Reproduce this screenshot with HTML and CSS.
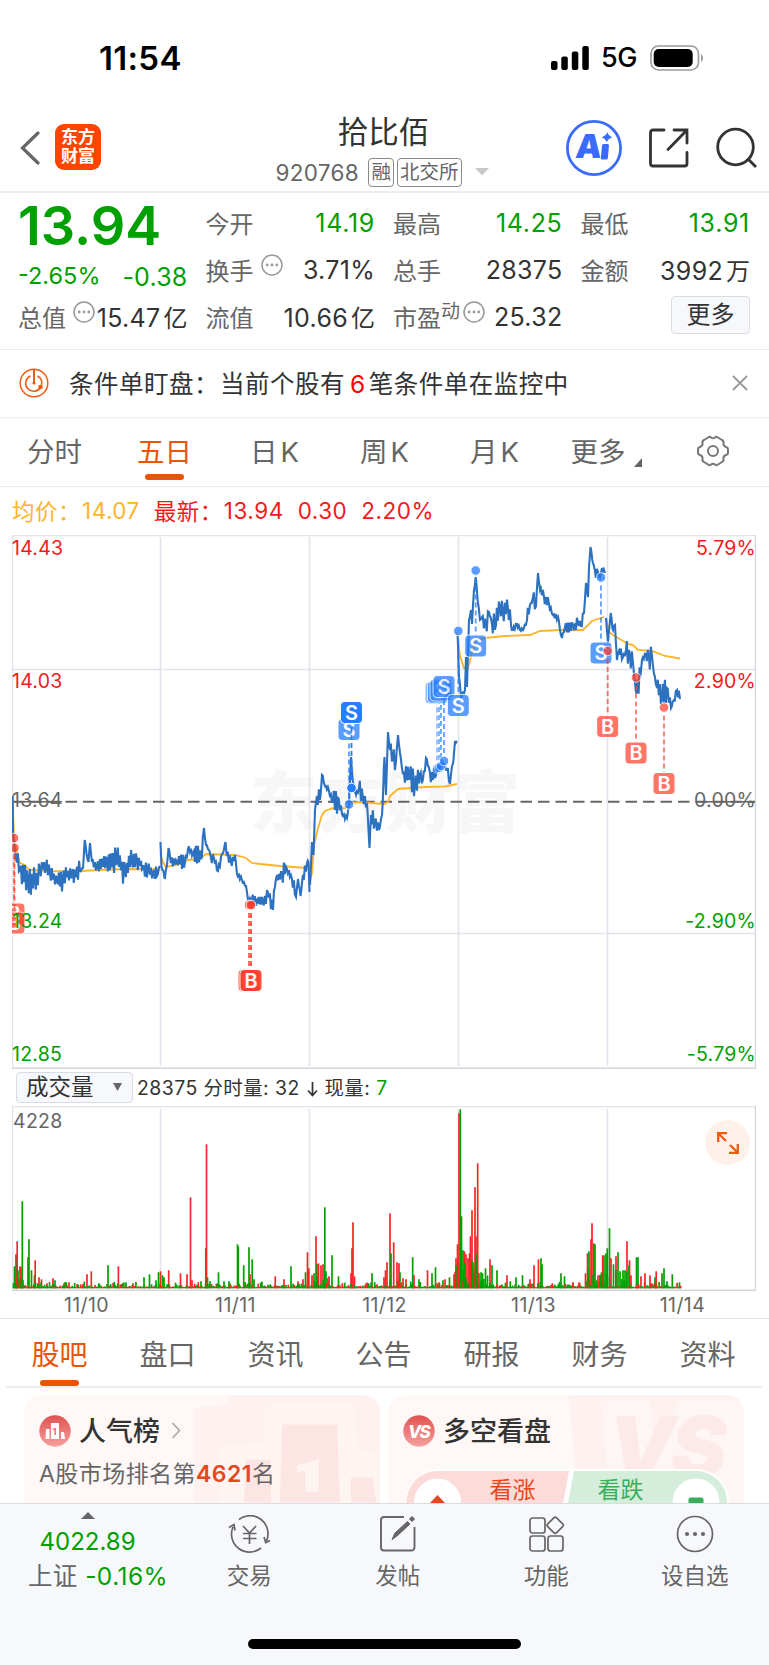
FILE: index.html
```html
<!DOCTYPE html>
<html lang="zh-CN">
<head>
  <meta charset="utf-8">
  <title>拾比佰 920768</title>
  <link rel="stylesheet" href="styles.css">
</head>
<body>
  <div class="status-bar">
    <span class="time">11:54</span>
    <div class="status-icons">
      <svg class="signal" width="38" height="24" viewBox="0 0 38 24">
        <rect x="0" y="15" width="6.5" height="9" rx="2"/>
        <rect x="10.3" y="10.5" width="6.5" height="13.5" rx="2"/>
        <rect x="20.8" y="5.5" width="6.5" height="18.5" rx="2"/>
        <rect x="31.3" y="0" width="6.5" height="24" rx="2"/>
      </svg>
      <span class="network">5G</span>
      <svg width="54" height="26" viewBox="0 0 54 26">
        <rect x="1" y="1" width="47.5" height="24" rx="7.5" fill="none" stroke="#9a9a9a" stroke-width="1.6"/>
        <rect x="3.7" y="4" width="39" height="18" rx="5"/>
        <path d="M51 9v8c2.6-1.4 2.6-6.6 0-8z" fill="#9a9a9a"/>
      </svg>
    </div>
  </div>

  <div class="header">
    <div class="header-left">
      <svg width="20" height="34" viewBox="0 0 20 34"><path d="M18 2L2.500 17L18 32" fill="none" stroke="#666" stroke-width="3.2" stroke-linecap="round"/></svg>
      <div class="logo"><span>东方</span><span>财富</span></div>
    </div>
    <div class="header-title">
      <h1 class="stock-name">拾比佰</h1>
      <div class="stock-meta">
        <span class="code">920768</span>
        <span class="tag">融</span>
        <span class="tag">北交所</span>
        <svg class="meta-arrow" width="14" height="8" viewBox="0 0 14 8"><path d="M0 0h14L7 7.500z" fill="#c8c8c8"/></svg>
      </div>
    </div>
    <div class="header-right">
      <svg width="56" height="56" viewBox="0 0 56 56">
        <circle cx="28" cy="28" r="26.600" fill="none" stroke="#3a6bff" stroke-width="2.800"/>
        <g fill="#3a6bff" transform="translate(3 0) skewX(-5)">
          <text class="ai-letter" x="9" y="38.300">A</text>
          <rect x="35.200" y="24" width="7" height="15.500" rx="1.500"/>
          <path d="M39.500 13.500Q40.500 16.200 43.500 17.200Q40.500 18.500 39.500 21Q38.500 18.500 35.500 17.200Q38.500 16.200 39.500 13.500z" stroke="#3a6bff"/>
        </g>
      </svg>
      <svg width="40" height="40" viewBox="0 0 40 40" fill="none" stroke="#333" stroke-width="2.800">
        <path d="M15 2H4Q1.500 2 1.500 4.500V35.500Q1.500 38 4 38H35.500Q38 38 38 35.500V24.500M25 2H38V15M38 2L19 21.500" stroke-linecap="round"/>
      </svg>
      <svg width="42" height="42" viewBox="0 0 42 42" fill="none" stroke="#333" stroke-width="2.800">
        <circle cx="19.500" cy="20" r="17.800"/><path d="M31.500 31.500L40 40"/>
      </svg>
    </div>
  </div>

  <div class="quote">
    <div class="quote-price">
      <div class="price">13.94</div>
      <div class="change"><span>-2.65%</span><span class="diff">-0.38</span></div>
    </div>
    <div class="cell"><span class="label">今开</span><span class="value down">14.19</span></div>
    <div class="cell"><span class="label">最高</span><span class="value down">14.25</span></div>
    <div class="cell"><span class="label">最低</span><span class="value down">13.91</span></div>
    <div class="cell"><span class="label">换手</span><svg class="dots" viewBox="0 0 22 22"><use href="#dots"/></svg><span class="value">3.71%</span></div>
    <div class="cell"><span class="label">总手</span><span class="value">28375</span></div>
    <div class="cell"><span class="label">金额</span><span class="value">3992<i>万</i></span></div>
    <div class="cell"><span class="label">总值</span><svg class="dots" viewBox="0 0 22 22"><use href="#dots"/></svg><span class="value">15.47<i>亿</i></span></div>
    <div class="cell"><span class="label">流值</span><span class="value">10.66<i>亿</i></span></div>
    <div class="cell"><span class="label">市盈<sup>动</sup></span><svg class="dots dots-tight" viewBox="0 0 22 22"><use href="#dots"/></svg><span class="value">25.32</span></div>
    <div class="cell cell-more"><button class="more-button">更多</button></div>
  </div>

  <div class="notice">
    <svg width="30" height="30" viewBox="0 0 30 30" fill="none" stroke="#ef5a10" stroke-width="1.500">
      <circle cx="15" cy="15" r="13.800"/>
      <path d="M11.500 8A8 8 0 1 0 21.500 19.500M18.500 8A8 8 0 0 1 22.500 17"/>
      <path d="M15 1V15" stroke-width="2"/>
      <circle cx="15" cy="15" r="1.600" fill="#ef5a10" stroke="none"/>
      <circle cx="21.500" cy="19" r="2.300" fill="#ef5a10" stroke="none"/>
    </svg>
    <span class="notice-text">条件单盯盘：<span class="notice-msg">当前个股有<b>6</b>笔条件单在监控中</span></span>
    <svg class="close" width="16" height="16" viewBox="0 0 16 16"><path d="M1 1L15 15M15 1L1 15" stroke="#999" stroke-width="1.800"/></svg>
  </div>

  <div class="period-tabs">
    <span>分时</span>
    <span class="active">五日</span>
    <span>日<i>K</i></span>
    <span>周<i>K</i></span>
    <span>月<i>K</i></span>
    <span class="tab-more">更多<svg width="8" height="9" viewBox="0 0 8 9"><path d="M8 0V9H0z" fill="#666"/></svg></span>
    <span class="tab-gear">
      <svg width="34" height="32" viewBox="0 0 34 32" fill="none" stroke="#777" stroke-width="2">
        <path d="M12 2.500Q14 1 15 2.500Q17 4 19 2.500Q20 1 22 2.500L26 5Q28 6 27.500 8Q27 11 30 12Q32 12.500 32 14V18Q32 19.500 30 20Q27 21 27.500 24Q28 26 26 27L22 29.500Q20 31 19 29.500Q17 28 15 29.500Q14 31 12 29.500L8 27Q6 26 6.500 24Q7 21 4 20Q2 19.500 2 18V14Q2 12.500 4 12Q7 11 6.500 8Q6 6 8 5z"/>
        <circle cx="17" cy="16" r="5"/>
      </svg>
    </span>
  </div>

  <div class="legend">
    <span class="avg name">均价：</span><span class="avg num">14.07</span>
    <span class="latest name">最新：</span><span class="latest num">13.94</span>
    <span class="latest num">0.30</span>
    <span class="latest num">2.20%</span>
  </div>

  <svg class="price-chart" viewBox="12 535 744 534">
    <text class="watermark" x="250" y="827" textLength="270">东方财富</text>
    <g class="grid">
      <path d="M12.500 535V1068M160.500 537V1066M309.500 537V1066M458.500 537V1066M607.500 537V1066M12 535.500H756M12 669.500H756M12 933.500H756"/>
      <path class="frame" d="M755.500 535V1068.200H12"/>
    </g>
    <path class="zero-line" d="M13 801.700H755"/>
    <path class="zero-end" d="M13 801.700H62M697 801.700H755"/>
    <g id="avgLines" class="avg-line"></g>
    <g id="priceLines" class="price-line"></g>
    <g id="marks"></g>
    <g class="axis">
      <text class="red" x="12" y="554.500">14.43</text>
      <text class="red" x="12" y="687.500">14.03</text>
      <text class="gray" x="12" y="807">13.64</text>
      <text class="green" x="12" y="928">13.24</text>
      <text class="green" x="12" y="1061">12.85</text>
      <g text-anchor="end">
        <text class="red" x="756" y="554.500">5.79%</text>
        <text class="red" x="756" y="687.500">2.90%</text>
        <text class="gray" x="756" y="807">0.00%</text>
        <text class="green" x="756" y="928">-2.90%</text>
        <text class="green" x="756" y="1061">-5.79%</text>
      </g>
    </g>
  </svg>

  <div class="volume-head">
    <button class="volume-select">成交量<svg width="9" height="8" viewBox="0 0 9 8"><path d="M0 0h9L4.500 8z" fill="#666"/></svg></button>
    <span class="volume-info">28375 分时量: 32 <svg width="11" height="16" viewBox="0 0 11 16"><path d="M5.500 1V14M1 9.500L5.500 14.500L10 9.500" fill="none" stroke="#333" stroke-width="1.700"/></svg> 现量: <em>7</em></span>
  </div>

  <div class="volume-wrap">
    <svg class="volume-chart" viewBox="12 1106 744 185">
      <path class="grid-line" d="M12.500 1106V1290M160.500 1109V1288M309.500 1109V1288M458.500 1109V1288M607.500 1109V1288M12 1106.500H756"/>
      <path class="frame" d="M755.500 1106V1290.200H12"/>
      <g id="bars"></g>
      <text class="volume-max" x="13" y="1127.500">4228</text>
    </svg>
    <div class="expand">
      <svg width="22" height="22" viewBox="0 0 22 22" fill="none" stroke="#ef5a10" stroke-width="2.300"><path d="M1.200 10V1.200H10M1.200 1.200L9 9M20.800 12V20.800H12M20.800 20.800L13 13"/></svg>
    </div>
  </div>
  <div class="dates"><span>11/10</span><span>11/11</span><span>11/12</span><span>11/13</span><span>11/14</span></div>

  <div class="info-tabs">
    <span class="active">股吧</span>
    <span>盘口</span>
    <span>资讯</span>
    <span>公告</span>
    <span>研报</span>
    <span>财务</span>
    <span>资料</span>
  </div>

  <div class="cards">
    <div class="card">
      <svg class="card-bg" viewBox="0 0 356 107">
        <path d="M170 12L204 10V0H356V107H170z" fill="#fef1ef"/>
        <path d="M196 50L240 48L242 8L330 7L333 56L356 58V107H196z" fill="#fef5f3"/>
        <path d="M222 64H247V107H220zM258 29H313L316 107H256zM327 82H349L352 107H327z" fill="#fce5e3"/>
        <path d="M273 70L295 63V96H281V75L273 77z" fill="#fef5f3"/>
      </svg>
      <div class="card-head">
        <svg width="32" height="32" viewBox="0 0 32 32">
          <defs><linearGradient id="badge" x1="0" y1="0" x2="0" y2="1"><stop offset="0" stop-color="#e05250"/><stop offset="1" stop-color="#f4a19d"/></linearGradient></defs>
          <circle cx="16" cy="16" r="15.700" fill="url(#badge)"/>
          <path d="M7 14H10.500V24H6.500zM12 8H20V24H12zM22 17H25L26 24H22z" fill="#fff"/>
          <text class="badge-one" x="13.500" y="19.500">1</text>
        </svg>
        <h2>人气榜</h2>
        <svg class="chevron" width="10" height="17" viewBox="0 0 10 17"><path d="M1.500 1L8.500 8.500L1.500 16" fill="none" stroke="#aaa" stroke-width="1.700"/></svg>
      </div>
      <div class="rank">A股市场排名第<b>4621</b>名</div>
    </div>
    <div class="card">
      <svg class="card-bg" viewBox="0 0 356 107">
        <path d="M181 0H356V107H190z" fill="#fef1ef"/>
        <path d="M213 5H262L266 50L292 5H356V107H222z" fill="#fef6f4"/>
        <text class="vs-front" x="220" y="81">VS</text>
      </svg>
      <div class="card-head">
        <svg width="32" height="32" viewBox="0 0 32 32"><circle cx="16" cy="16" r="15.700" fill="url(#badge)"/><text class="badge-vs" x="5" y="22.500">VS</text></svg>
        <h2>多空看盘</h2>
      </div>
      <svg class="vote" width="324" height="34" viewBox="0 0 324 34">
        <path d="M0 34A33 33 0 0 1 34 0H290A33 33 0 0 1 324 34z" fill="#fff"/>
        <path d="M1.500 34A31 31 0 0 1 35 2H164L158 34z" fill="#fddbd8"/>
        <path d="M169 2H290A31 31 0 0 1 322 34H163z" fill="#d5eedb"/>
        <circle cx="32.500" cy="33" r="23.500" fill="#fff"/>
        <circle cx="291" cy="33" r="23.500" fill="#fff"/>
        <path d="M32.500 26L40 34H25z" fill="#e5481c"/>
        <rect x="283.500" y="28.500" width="15" height="7" rx="2" fill="#3bae5c"/>
        <text class="vote-up" x="84.500" y="28.500">看涨</text>
        <text class="vote-down" x="192.500" y="28.500">看跌</text>
      </svg>
    </div>
  </div>

  <div class="bottom-bar">
    <div class="index">
      <svg width="14" height="7" viewBox="0 0 14 7"><path d="M0 7L7 0L14 7z" fill="#666"/></svg>
      <div class="index-value">4022.89</div>
      <div class="index-change">上证 <em>-0.16%</em></div>
    </div>
    <div class="action">
      <svg width="44" height="38" viewBox="0 0 44 38" fill="none" stroke="#666" stroke-width="1.700">
        <path d="M12 4.500A18 18 0 0 1 39.500 26M39 28.500L37 22M38 28L43 25.500M34 33A18 18 0 0 1 6 12M2 12.500L7 9.500L8 15.500"/>
        <path d="M16 11L22.500 18L29 11M22.500 18V29M16 18.500H29.500M16 23.500H29.500"/>
      </svg>
      <span>交易</span>
    </div>
    <div class="action">
      <svg width="38" height="38" viewBox="0 0 38 38" fill="none" stroke="#666" stroke-width="1.900">
        <path d="M25 2H5Q2 2 2 5V32.500Q2 35.500 5 35.500H32Q35.500 35.500 35.500 32V12"/>
        <path d="M13 24.500L16 18L28.500 6.500L31 9L18 21z" fill="#666" stroke-width="1"/>
        <path d="M31.500 5.500L34.500 2.500" stroke-width="4.500"/>
      </svg>
      <span>发帖</span>
    </div>
    <div class="action">
      <svg width="36" height="38" viewBox="0 0 36 38" fill="none" stroke="#666" stroke-width="1.700">
        <rect x="2" y="3" width="15" height="15" rx="2.500"/>
        <rect x="2" y="21" width="15" height="15" rx="2.500"/>
        <rect x="20" y="21" width="15" height="15" rx="2.500"/>
        <rect x="21" y="4" width="12.500" height="12.500" rx="2" transform="rotate(45 27.200 10.200)"/>
      </svg>
      <span>功能</span>
    </div>
    <div class="action">
      <svg width="38" height="38" viewBox="0 0 38 38">
        <circle cx="19" cy="19" r="17.500" fill="none" stroke="#666" stroke-width="1.700"/>
        <g fill="#666"><circle cx="11" cy="19" r="2.100"/><circle cx="19" cy="19" r="2.100"/><circle cx="27" cy="19" r="2.100"/></g>
      </svg>
      <span>设自选</span>
    </div>
    <div class="home-indicator"></div>
  </div>

  <svg class="sprite">
    <symbol id="dots" viewBox="0 0 22 22">
      <circle cx="11" cy="11" r="10" fill="none" stroke="#999" stroke-width="1.500"/>
      <g fill="#999"><circle cx="6.200" cy="11" r="1.400"/><circle cx="11" cy="11" r="1.400"/><circle cx="15.800" cy="11" r="1.400"/></g>
    </symbol>
  </svg>
  <script src="chart.js"></script>
</body>
</html>
```
FILE: styles.css
```css
* {
  box-sizing: border-box;
}

body {
  margin: 0;
  width: 769px;
  height: 1665px;
  overflow: hidden;
  background: #fff;
  color: #333;
  font-family: Inter, "Noto Sans CJK SC", sans-serif;
}

h1, h2 {
  margin: 0;
}

em, i {
  font-style: normal;
}

svg {
  display: block;
  flex: none;
}

button {
  padding: 0;
  font-family: inherit;
  color: #333;
  background: #f7f8fb;
  border: 1px solid #d9dce3;
  border-radius: 4px;
}

.sprite {
  width: 0;
  height: 0;
}

/* status bar */
.status-bar {
  display: flex;
  justify-content: space-between;
  align-items: center;
  height: 96px;
  padding: 19px 65px 0 99px;
}

.time {
  font-size: 33px;
  font-weight: 600;
  color: #000;
  letter-spacing: 0.3px;
}

.status-icons {
  display: flex;
  align-items: center;
}

.network {
  width: 49px;
  margin-left: 12px;
  font-size: 27px;
  font-weight: 500;
  color: #000;
  letter-spacing: -0.5px;
}

/* header */
.header {
  display: grid;
  grid-template-columns: 1fr auto 1fr;
  height: 97px;
  border-bottom: 2px solid #ededed;
}

.header-left {
  display: flex;
  align-items: center;
  height: 104px;
  padding-left: 20px;
}

.logo {
  display: flex;
  flex-direction: column;
  align-items: center;
  justify-content: center;
  width: 46px;
  height: 46px;
  margin: 0 0 2px 15px;
  background: #ff4400;
  border-radius: 9px;
  color: #fff;
  font-size: 17px;
  font-weight: 700;
  line-height: 19px;
}

.header-title {
  display: flex;
  flex-direction: column;
  align-items: center;
}

.stock-name {
  margin: 16px 2px 0 0;
  font-size: 30.5px;
  font-weight: 400;
  line-height: 40px;
}

.stock-meta {
  display: flex;
  align-items: center;
  height: 30px;
  margin: 5px 5px 0 0;
}

.code {
  width: 93px;
  font-size: 22.5px;
  color: #666;
  letter-spacing: 0.3px;
}

.tag {
  height: 29px;
  padding: 0 2px;
  margin-right: 3px;
  border: 1px solid #888;
  border-radius: 4px;
  font-size: 19.5px;
  line-height: 26px;
  color: #666;
}

.meta-arrow {
  margin-left: 10px;
}

.header-right {
  display: flex;
  align-items: center;
  justify-content: flex-end;
  gap: 27px;
  height: 104px;
  padding-right: 11px;
}

.ai-letter {
  font-size: 33px;
  font-weight: 900;
}

/* quote */
.quote {
  display: grid;
  grid-template-columns: repeat(4, 169.5px);
  grid-template-rows: 47px 47px 47px;
  column-gap: 18px;
  height: 157px;
  padding: 6px 0 0 18px;
  border-bottom: 1px solid #eee;
}

.quote-price {
  grid-row: span 2;
  color: #00a000;
}

.price {
  height: 62px;
  font-size: 54px;
  font-weight: 600;
  line-height: 54px;
  white-space: nowrap;
}

.change {
  display: flex;
  justify-content: space-between;
  font-size: 23.5px;
  line-height: 30px;
}

.diff {
  font-size: 25px;
  line-height: 32px;
  letter-spacing: 0.2px;
}

.cell {
  display: flex;
  align-items: center;
}

.label {
  font-size: 24px;
  color: #666;
  white-space: nowrap;
}

.label sup {
  position: relative;
  top: -9px;
  font-size: 19px;
  line-height: 0;
  vertical-align: baseline;
}

.value {
  flex: 1;
  font-size: 25px;
  text-align: right;
  letter-spacing: 0.3px;
  white-space: nowrap;
}

.value i {
  margin-left: 3px;
  font-size: 24px;
  letter-spacing: 0;
}

.down {
  color: #00a000;
  letter-spacing: 0.7px;
}

.dots {
  width: 22px;
  height: 22px;
  margin: -9px 0 0 7px;
}

.dots-tight {
  margin-left: 3px;
}

.cell-more {
  justify-content: flex-end;
}

.more-button {
  width: 79px;
  height: 38px;
  margin: -3px 0 0;
  font-size: 24px;
  line-height: 34px;
}

/* notice */
.notice {
  display: flex;
  align-items: center;
  height: 69px;
  padding: 0 21px 2px 19px;
  border-bottom: 2px solid #f5f5f5;
}

.notice-text {
  flex: 1;
  margin-left: 20px;
  font-size: 24.5px;
  letter-spacing: 0.5px;
}

.notice-msg {
  margin-left: 1px;
}

.notice-msg b {
  margin: 0 3px 0 5px;
  font-weight: 400;
  color: #f00;
}

/* period tabs */
.period-tabs {
  display: grid;
  grid-template-columns: repeat(7, 110px);
  height: 68px;
  border-bottom: 1px solid #eee;
  font-size: 27.5px;
  line-height: 67px;
  color: #666;
  text-align: center;
  text-indent: -1px;
}

.period-tabs i {
  margin-left: 3px;
}

.period-tabs .active,
.info-tabs .active {
  position: relative;
  color: #ea5504;
}

.period-tabs .active::after,
.info-tabs .active::after {
  content: "";
  position: absolute;
  left: 50%;
  bottom: 6px;
  width: 39px;
  height: 6px;
  margin-left: -20px;
  border-radius: 3px;
  background: #ea5504;
}

.tab-more,
.tab-gear {
  display: flex;
  align-items: center;
  justify-content: center;
}

.tab-gear {
  padding: 0 4px 3px 0;
}

.tab-more {
  padding-left: 3px;
}

.tab-more svg {
  margin: 20px 0 0 8px;
}

/* legend */
.legend {
  display: flex;
  align-items: center;
  height: 48px;
  padding: 0 0 2px 12px;
  font-size: 22.5px;
  letter-spacing: 0.5px;
}

.legend .name {
  width: 70px;
}

.legend .num {
  margin-right: 14px;
}

.avg {
  color: #fdb428;
}

.latest {
  color: #f5191c;
}

/* price chart */
.price-chart {
  width: 744px;
  height: 534px;
  margin-left: 12px;
}

.watermark {
  font-size: 67px;
  font-weight: 900;
  fill: #f7f7f7;
}

.grid path,
.grid-line {
  fill: none;
  stroke: #e1e4ec;
  stroke-width: 1.6;
}

.grid .frame,
.frame {
  fill: none;
  stroke: #d2d5dd;
  stroke-width: 1.5;
}

.zero-line,
.zero-end {
  stroke: #666;
  stroke-width: 2;
  stroke-dasharray: 11.5 6;
}

.zero-end {
  stroke-width: 1.6;
  stroke-dasharray: none;
}

.avg-line path {
  fill: none;
  stroke: #fdb32a;
  stroke-width: 1.8;
}

.price-line path {
  fill: none;
  stroke: #2d72c0;
  stroke-width: 2.1;
}

.axis {
  font-size: 19.5px;
  letter-spacing: 0.25px;
}

.red { fill: #f5191c; }
.gray { fill: #666; }
.green { fill: #00a000; }

.mark-letter {
  font-size: 20px;
  font-weight: 600;
  fill: #fff;
  text-anchor: middle;
}

/* volume */
.volume-head {
  display: flex;
  align-items: center;
  height: 37px;
  padding: 0 0 0 16px;
}

.volume-select {
  display: flex;
  align-items: center;
  justify-content: space-between;
  width: 117px;
  height: 31px;
  padding: 0 10px 1px 9px;
  font-size: 22.5px;
  line-height: 28px;
}

.volume-info {
  margin: 0 0 2px 4px;
  font-size: 19.4px;
  letter-spacing: 0.45px;
  white-space: pre;
}

.volume-info svg {
  display: inline-block;
  vertical-align: -2px;
  margin: 0 1px;
}

.volume-info em {
  color: #00a000;
}

.volume-wrap {
  position: relative;
  height: 185px;
}

.volume-chart {
  width: 744px;
  height: 185px;
  margin-left: 12px;
}

.volume-max {
  font-size: 19.5px;
  letter-spacing: 0.3px;
  fill: #666;
}

.expand {
  position: absolute;
  right: 19px;
  top: 14px;
  display: flex;
  align-items: center;
  justify-content: center;
  width: 45px;
  height: 45px;
  border-radius: 50%;
  background: #fef1ea;
}

.dates {
  display: grid;
  grid-template-columns: repeat(5, 149px);
  height: 28px;
  padding-left: 12px;
  border-bottom: 1px solid #e6e6e6;
  font-size: 19.5px;
  line-height: 29px;
  letter-spacing: 0.4px;
  color: #666;
  text-align: center;
}

/* info tabs */
.info-tabs {
  display: grid;
  grid-template-columns: repeat(7, 108px);
  height: 69px;
  margin: 0 7px 0 6px;
  border-bottom: 2px solid #eee;
  font-size: 28px;
  line-height: 72px;
  color: #666;
  text-align: center;
  text-indent: -1px;
}

.info-tabs .active::after {
  bottom: 5px;
}

/* cards */
.cards {
  display: flex;
  gap: 8px;
  height: 115px;
  padding: 7px 24px 0;
  overflow: hidden;
}

.card {
  position: relative;
  width: 356px;
  height: 140px;
  padding: 19px 15px;
  border-radius: 17px;
  background: #fff8f6;
  overflow: hidden;
}

.card-bg {
  position: absolute;
  left: 0;
  top: 0;
  width: 356px;
  height: 108px;
}

.card-head {
  position: relative;
  display: flex;
  align-items: center;
  height: 33px;
}

.card-head h2 {
  margin: -2px 0 0 8px;
  font-size: 27px;
  font-weight: 500;
  white-space: nowrap;
}

.chevron {
  margin-left: 11px;
}

.rank {
  position: relative;
  margin-top: 11px;
  font-size: 23px;
  line-height: 32px;
  letter-spacing: 0.45px;
  color: #666;
}

.rank b {
  font-weight: 600;
  color: #e5481c;
}

.badge-one {
  font-size: 9px;
  font-weight: 800;
  fill: #e47270;
}

.badge-vs {
  font-size: 17px;
  font-weight: 800;
  font-style: italic;
  letter-spacing: -1.5px;
  fill: #fff;
}

.vs-front {
  font-size: 84px;
  font-weight: 900;
  font-style: italic;
  letter-spacing: -4px;
  fill: #fde9e7;
}

.vote {
  position: relative;
  margin: 22px 0 0 2px;
}

.vote-up,
.vote-down {
  font-size: 23px;
  fill: #e5481c;
}

.vote-down {
  fill: #3bae5c;
}

/* bottom bar */
.bottom-bar {
  position: relative;
  display: grid;
  grid-template-columns: 175px repeat(4, 148.5px);
  height: 162px;
  border-top: 1px solid #dcdcdc;
  background: #f7f8fb;
}

.index {
  display: flex;
  flex-direction: column;
  align-items: center;
  padding-top: 8px;
}

.index-value {
  margin-top: 6px;
  font-size: 24px;
  line-height: 34px;
  color: #00a000;
}

.index-change {
  margin-left: 21px;
  font-size: 24.5px;
  line-height: 34px;
  letter-spacing: 0.45px;
  color: #666;
  white-space: nowrap;
}

.index-change em {
  color: #00a000;
}

.action {
  display: flex;
  flex-direction: column;
  align-items: center;
  padding-top: 11px;
  font-size: 22.5px;
  line-height: 32px;
  color: #666;
}

.action span {
  margin-top: 7px;
}

.home-indicator {
  position: absolute;
  left: 248px;
  bottom: 16px;
  width: 273px;
  height: 10px;
  border-radius: 5px;
  background: #000;
}
```
FILE: chart.js
```js
const NS = 'http://www.w3.org/2000/svg';

// [x, y, jitter] per trading day
const price = [
  [[12.7,796],[13,833],[14,842],[15,852,3],[16,858,6],[20,870,8],[28,881,9],[35,880,8],[40,870,4],[46,865,5],[50,873,4],[57,880,8],[63,877,5],[72,873,6],[80,871,1],[83,868],[84.7,840],[87.500,859],[88.500,862],[90,843],[92,862,3],[97,866,4],[107,860,8],[117,861,9],[125,869,7],[132,861,4],[137,860,6],[143,868,7],[148,867,4],[153,873,5],[157,876,2],[160,866]],
  [[160.500,842],[161.500,867],[165,878],[167,865],[168.500,848],[171,863,3],[177,862,5],[185,862,6],[188,849,2],[193,853,5],[202,856,5],[204,828],[206,845],[209,850],[211,858,3],[214,858,2],[218,871,3],[221,857],[223,853],[225.500,842],[227,856,3],[231,862,3],[235,855],[237,874],[242,880],[246,886],[248,900],[252,899,4],[257,900,4],[263,903,5],[268,893,4],[273,910],[274,890],[277,875,3],[282,875,6],[287,869,5],[292,879,4],[296,897],[298,879],[300.500,896],[303,875,4],[307,863],[308.500,862],[309.500,892]],
  [[310,885],[312,842],[313.500,855],[315,810],[317,796,5],[320,800,5],[322,775],[325,786,2],[329,791,4],[333,802,8],[338,798,5],[342,814,3],[347,818],[349,804],[351,757],[353,783],[356,795],[359,788,6],[363,799,5],[367,803],[369.500,848],[371,815,6],[375,822,3],[379,830],[382,815,3],[384.5,757],[386,795],[388,732],[390,750,5],[393,757,6],[396,761],[398,735],[400,753],[403,774,5],[410,774,9],[415,783,8],[420,774,5],[423,779,3],[426,758],[430,773,5],[435,778],[438,768],[443,762],[447,770,4],[450,784],[452,766],[453.500,760],[455,741],[457,741]],
  [[457.700,636],[459,677],[461,697],[465,690],[466,657],[467,687],[469,620],[471,610],[472,624],[474,590],[475.700,577],[478,603],[480,620],[482,617,6],[486,625,8],[489,612],[492,624,7],[496,625,8],[500,608,7],[503,614,6],[508,609,6],[511,625,3],[513,630],[517,624],[520,630],[523,630],[527,620,5],[531,603,3],[533,597,4],[536,606],[538,573],[540,590,5],[544,597,5],[549,604,4],[553,615,2],[558,617],[560,630],[562,638],[565,627,3],[573,627,4],[578,622,3],[581,626,4],[584,613],[586,583],[588,597],[589,567],[590.500,547],[593,563],[595,571,5],[598,572,4],[600,578],[602,568],[605,573]],
  [[606,618],[608,643],[610.700,613],[613,630],[615,625,4],[617,660],[619,651,4],[623,657,6],[626,650,7],[630,657,6],[633,663],[635.700,690,7],[640,678],[642,660],[646,654,4],[649,657,7],[652,656],[654,674],[657,688,6],[662,698,8],[667,688,8],[671,708],[674,700,2],[677,690,3],[680,699]]
];

const average = [
  [[12.700,800],[14,838],[17,854],[20,863],[25,865],[28,869],[32,870],[50,871],[70,871.500],[110,869.500],[140,869],[160,869.500]],
  [[160.500,855],[163,862],[166,867],[180,864],[188,860],[200,859],[206,854],[235,855],[246,858],[252,863],[265,864.500],[280,866],[307,868]],
  [[309,885],[312,873],[314,845],[318,828],[322,815],[325,811],[332,808.500],[345,808],[352,803],[358,802],[384,804],[388,802],[390,796],[398,789],[425,787],[445,786.500],[457,784]],
  [[457,632],[460,656],[464,668],[468,668],[471,656],[476,640],[485,638],[505,636],[530,635],[540,631],[560,630],[583,630],[592,621],[604,617]],
  [[606,618],[609,632],[613,635],[618,638],[628,644],[633,645],[638,650],[652,651],[665,656],[680,658.500]]
];

// type, label x/y, point x/y, opacity
const marks = [
  ['B', 14, 914, 14, 838, 0.7], ['B', 14, 923, 14.5, 848, 0.7],
  ['B', 249, 980.5, 249, 905, 0.8], ['B', 251, 980.5, 251, 905, 0.9],
  ['S', 349, 729.5, 349, 804.5, 0.75], ['S', 351.5, 712.5, 351.5, 788, 1],
  ['S', 436, 693, 437, 768.5, 0.5], ['S', 438.5, 692, 439, 768, 0.6], ['S', 441, 690, 441, 766, 0.7], ['S', 444, 686.5, 444, 761, 0.75],
  ['S', 458.3, 705.5, 458.3, 631, 0.75], ['S', 475.7, 646, 475.7, 570.5, 0.75], ['S', 601, 653, 601, 577.5, 0.75],
  ['B', 607.7, 726.5, 607.7, 651, 0.7], ['B', 636, 753, 636, 677.5, 0.7], ['B', 664, 783.5, 664, 707.5, 0.7]
];

// x:height, the last letter is the colour
const spikes = '14.5:22g 16:34r 16.5:30g 17.2:47r 18:18g 20:22r 21:21r 22.3:87g 23:8g 28:31g 29:49g 31.5:18g 34.5:13g 35.2:28r 39:11r 41.5:9r 47:5r 53:10r 55:8g 64:5r 69:6r 83:4r 87:14r 91.3:17r 108:23g 118.4:22r 126:6g 133:5g 144:11g 149.5:14g 156:8g 158.5:16g 160.5:17r 162.5:13g 164:11g 168.7:18r 180.5:15r 187:14r 190.5:91r 192:8r 201:7g 205.8:40r 206.5:144r 207.5:11g 210:7g 218.5:16g 224:7g 229:7g 230:5g 237.5:44g 238.3:42g 243.7:23g 249:41g 250:14r 252.2:29g 254:9g 275.3:12r 284:9r 291:22g 298:7r 303:9r 305.5:16g 307.5:36r 308.8:20r 312:13r 314:15g 316:52r 317:24g 318.5:25r 321:23r 323:24r 324.8:81g 326:17g 329:12r 332:33g 338.5:12g 351:15r 352:40r 353:66r 354.5:12r 372:15g 384:11r 385.5:18r 387:26r 390:75r 391:35g 393.7:46r 397:26r 399:25r 400:16g 403:10r 406:9r 412.7:31g 414:13r 419:9g 427.5:18r 432:15g 435.5:21g 439:6r 443:8g 445:9r 449.5:11g 454:14r 456:30r 457.5:44r 459:175r 460.3:179g 461.5:72g 463:38g 464.5:37r 466:34r 468:30r 469.5:35r 470.5:52r 472:78r 473:26g 475:101r 476:52r 476.5:35g 477.7:125r 479:15g 481:16g 482.5:15g 485.5:20g 490:29r 492:23g 497:18g 507:13r 516:11g 522.5:13g 530:9r 534:23r 538.5:29r 541:30g 542:24g 561:15g 564.5:12g 573:6r 579:6r 585.5:15r 587.5:35r 589:37g 591:49r 592:65r 593.8:45g 595:44g 598:13r 600:13g 602.7:33r 604:33g 606:35g 607.3:40g 609.5:60g 611:30r 613.5:24g 616:32r 618:36g 620:17g 623:18g 625:18g 627:47r 629.5:28r 629:23g 631:13r 636.5:31g 638:31g 641:12r 645:15r 650:13r 655:11g 656.2:17r 662:15g 664:20g 667:7g 672.3:14g 679.5:6g';

let seed = 7;
function rand() {
  seed = (seed * 16807) % 2147483647;
  return seed / 2147483647;
}

function add(parent, name, attrs, text) {
  const el = document.createElementNS(NS, name);
  for (const key in attrs) el.setAttribute(key, attrs[key]);
  if (text) el.textContent = text;
  parent.appendChild(el);
  return el;
}

// fill in the ticks between two known points
function ticks(points) {
  let d = '';
  let side = 1;
  points.forEach(([x, y, jitter = 1.2], i) => {
    d += (i ? 'L' : 'M') + x + ' ' + y;
    const next = points[i + 1];
    if (!next) return;
    for (let tx = x + 0.8; tx < next[0] - 0.3; tx += 1.05) {
      const k = (tx - x) / (next[0] - x);
      const ty = y + (next[1] - y) * k + side * jitter * (0.35 + rand() * 1.5);
      d += 'L' + tx.toFixed(1) + ' ' + ty.toFixed(1);
      side = -side;
    }
  });
  return d;
}

const priceLines = document.getElementById('priceLines');
price.forEach(day => add(priceLines, 'path', { d: ticks(day) }));

const avgLines = document.getElementById('avgLines');
average.forEach(day => add(avgLines, 'path', { d: 'M' + day.join('L') }));

const markLayer = document.getElementById('marks');
marks.forEach(([type, lx, ly, px, py, opacity]) => {
  const color = type === 'B' ? '#ff3b28' : '#257dff';
  const g = add(markLayer, 'g', { opacity });
  add(g, 'path', { d: `M${px} ${py}L${px} ${ly}`, stroke: color, 'stroke-width': 1.8, 'stroke-dasharray': '5 3' });
  add(g, 'circle', { cx: px, cy: py, r: 4.8, fill: color, stroke: '#fff' });
  add(g, 'rect', { x: lx - 11, y: ly - 11, width: 22, height: 22, rx: 4, fill: color, stroke: '#fff' });
  add(g, 'text', { x: lx, y: ly + 7.3, class: 'mark-letter' }, type);
});

// volume bars
const bars = document.getElementById('bars');
const colors = { r: '#fb2427', g: '#00a000' };
function bar(x, h, c) {
  add(bars, 'path', { d: `M${x} 1288.300v${-h}`, stroke: colors[c], 'stroke-width': 1.7 });
}

function level(x) {
  if (x < 23) return 24;
  if (x < 36) return 8;
  if (x > 309 && x < 328) return 22;
  if (x > 386 && x < 402) return 15;
  if (x > 455 && x < 479) return 44;
  if (x > 586 && x < 630) return 22;
  if (x > 478 && x < 490) return 15;
  return 6;
}

spikes.split(' ').forEach(item => {
  const [x, h] = item.split(':');
  bar(+x, parseFloat(h), h.slice(-1));
});
for (let x = 13.5; x < 681; x += 1.2) {
  const h = 1.2 + rand() * rand() * level(x);
  bar(x.toFixed(1), h.toFixed(1), rand() < 0.42 ? 'r' : 'g');
}
```
